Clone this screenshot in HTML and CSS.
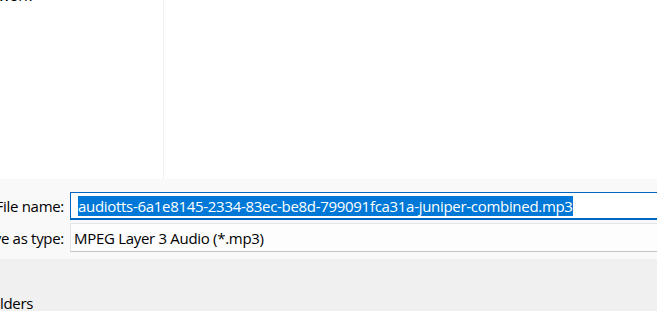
FILE: index.html
```html
<!DOCTYPE html>
<html>
<head>
<meta charset="utf-8">
<link rel="stylesheet" href="styles.css">
</head>
<body>
<div class="dialog">
  <div class="browser">
    <nav class="sidebar">
      <div class="nav-item">Network</div>
    </nav>
    <main class="files"></main>
  </div>
  <div class="fields">
    <div class="label">File name:</div>
    <div class="input focused"><span class="sel">audiotts-6a1e8145-2334-83ec-be8d-799091fca31a-juniper-combined.mp3</span></div>
    <div class="label">Save as type:</div>
    <div class="input select">MPEG Layer 3 Audio (*.mp3)</div>
  </div>
  <div class="footer">
    <div class="toggle">Hide Folders</div>
  </div>
</div>
</body>
</html>
```

FILE: styles.css
```css
html, body {
  margin: 0;
  padding: 0;
  width: 657px;
  height: 311px;
  overflow: hidden;
  background: #f0f0f0;
}
.dialog {
  font-family: "Segoe UI", "Open Sans", "Noto Sans", sans-serif;
  font-size: 15px;
  letter-spacing: -0.3px;
  color: #000;
  display: flex;
  flex-direction: column;
}
.browser {
  display: flex;
  height: 179px;
  background: #fff;
}
.sidebar {
  width: 163px;
  border-right: 1px solid #f0f0f0;
  overflow: hidden;
}
.nav-item {
  margin-top: -15px;
  margin-left: -26px;
  line-height: 20px;
  white-space: nowrap;
}
.files {
  flex: 1;
}
.fields {
  background: #f9f9f9;
  display: grid;
  grid-template-columns: 64px 700px;
  column-gap: 6px;
  row-gap: 3px;
  padding: 13px 0 7px 0;
}
.label {
  display: flex;
  justify-content: flex-end;
  align-items: center;
  white-space: nowrap;
}
.input {
  box-sizing: border-box;
  height: 28px;
  display: flex;
  align-items: center;
  padding-left: 7px;
  white-space: nowrap;
  background: #fff;
  border: 1px solid #e5e5e5;
}
.input.focused {
  border: 1px solid #0067c0;
  border-bottom: 2px solid #0067c0;
}
.sel {
  background: #0078d7;
  color: #fff;
  line-height: 20px;
}
.input.select {
  height: 29px;
  background: #fdfdfd;
  border: 1px solid #e5e5e5;
  border-bottom: 1px solid #c4c4c4;
  padding-left: 3px;
}
.footer {
  height: 53px;
  background: #f0f0f0;
  overflow: hidden;
}
.toggle {
  margin-top: 34px;
  margin-left: -51px;
  line-height: 20px;
  white-space: nowrap;
}
```
